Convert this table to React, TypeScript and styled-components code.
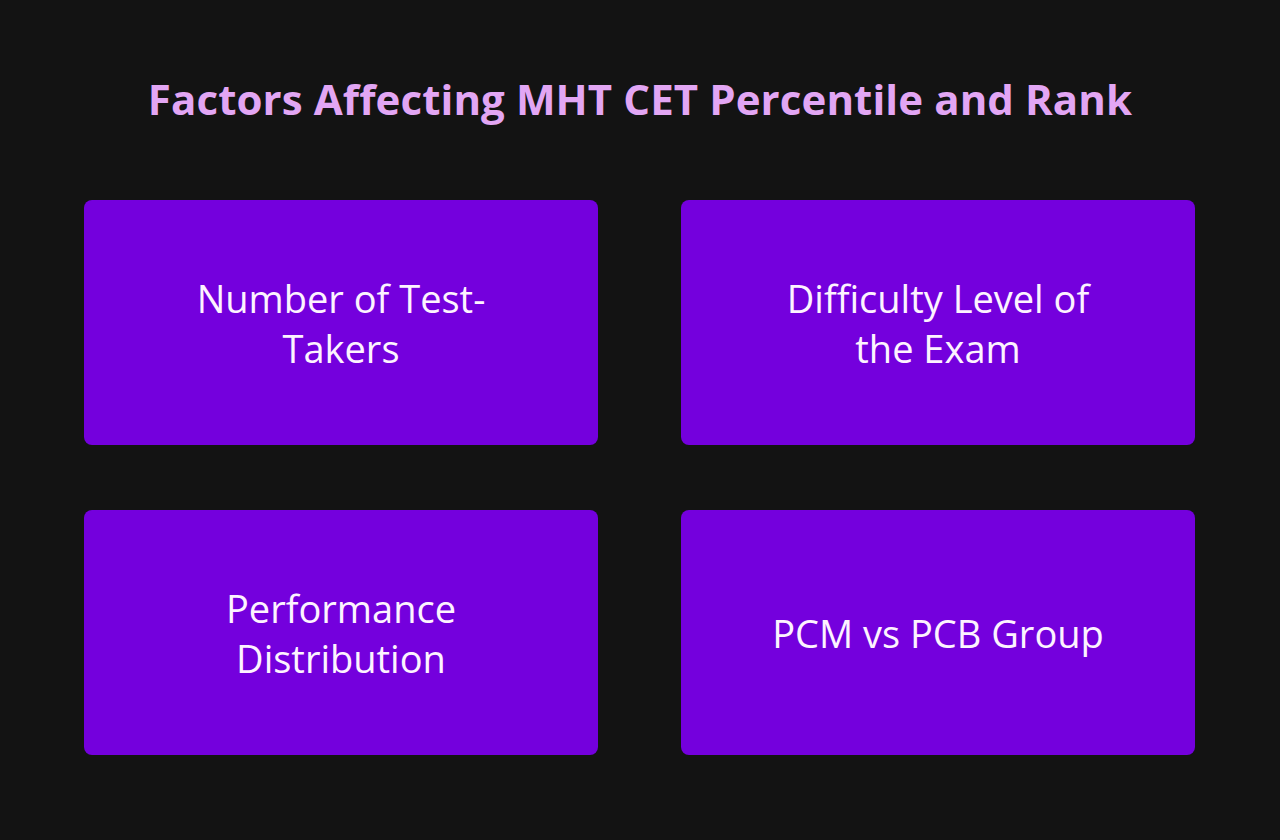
import React from "react";
import styled, { createGlobalStyle } from "styled-components";

const Global = createGlobalStyle`
  html, body { margin: 0; padding: 0; background: #131313; }
  body { font-family: "Open Sans", "Noto Sans", sans-serif; }
`;

const Page = styled.main`
  width: 1280px;
  height: 840px;
  box-sizing: border-box;
  padding: 74px 0 0 84px;
  display: flex;
  flex-direction: column;
  background: #131313;
`;

const Title = styled.h1`
  margin: 0;
  width: 1112px;
  font-family: "Open Sans", "Noto Sans", sans-serif;
  font-weight: 700;
  font-size: 42px;
  line-height: 50px;
  letter-spacing: 0.1px;
  color: #e2a6f4;
  text-align: center;
  white-space: nowrap;
`;

const Grid = styled.section`
  margin-top: 76px;
  display: grid;
  grid-template-columns: 514px 514px;
  grid-auto-rows: 245px;
  column-gap: 83px;
  row-gap: 65px;
`;

const Card = styled.div`
  background: #7400dd;
  border-radius: 8px;
  display: flex;
  align-items: center;
  justify-content: center;
`;

const CardText = styled.p`
  margin: 0;
  font-family: "Open Sans", "Noto Sans", sans-serif;
  font-weight: 400;
  font-size: 38px;
  line-height: 50px;
  color: #fdf3ff;
  text-align: center;
`;

const Line = styled.span`
  display: block;
  white-space: nowrap;
`;

const items: string[][] = [
  ["Number of Test-", "Takers"],
  ["Difficulty Level of", "the Exam"],
  ["Performance", "Distribution"],
  ["PCM vs PCB Group"],
];

export default function App() {
  return (
    <>
      <Global />
      <Page>
        <Title>Factors Affecting MHT CET Percentile and Rank</Title>
        <Grid>
          {items.map((lines, i) => (
            <Card key={i}>
              <CardText>
                {lines.map((l, j) => (
                  <Line key={j}>{l}</Line>
                ))}
              </CardText>
            </Card>
          ))}
        </Grid>
      </Page>
    </>
  );
}
